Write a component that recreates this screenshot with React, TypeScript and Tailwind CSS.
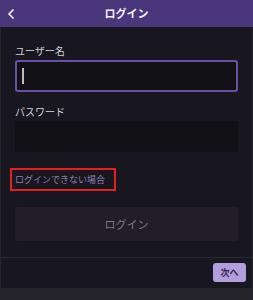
import { ChevronLeft } from 'lucide-react';

function Header() {
  return (
    <div className="relative flex h-[27px] items-center justify-center bg-[#4a367b]">
      <ChevronLeft
        className="absolute top-[6px] left-[3px] h-[16px] w-[16px] text-white"
        strokeWidth={2.5}
      />
      <span className="text-[11px] leading-none font-bold text-[#f1eef8]">ログイン</span>
    </div>
  );
}

function Field({ label, active }: { label: string; active?: boolean }) {
  return (
    <div className="flex flex-col gap-[3px]">
      <span className="text-[10px] leading-[13px] text-[#d6d4dc]">{label}</span>
      <div
        className={
          active
            ? 'flex h-[32px] items-center rounded-[3px] border-2 border-[#6a4fa6] bg-[#111014] pl-[5px]'
            : 'h-[31px] rounded-[2px] bg-[#111014]'
        }
      >
        {active && <span className="h-[16px] w-[2px] bg-[#bcb6c8]" />}
      </div>
    </div>
  );
}

export default function App() {
  return (
    <div
      className="flex h-[300px] w-[253px] flex-col bg-[#18161f]"
      style={{ fontFamily: '"Noto Sans CJK JP", "Noto Sans", sans-serif' }}
    >
      <Header />
      <div className="flex flex-1 flex-col border-x border-[#272430]">
        <div className="flex flex-col px-[14px] pt-[17px]">
          <Field label="ユーザー名" active />
          <div className="mt-[13px]">
            <Field label="パスワード" />
          </div>
          <div className="mt-[16px] -ml-[5px] flex h-[23px] w-[106px] items-center border-2 border-[#e3201f] pl-[3px]">
            <span className="text-[9px] leading-none whitespace-nowrap text-[#8e81b8]">
              ログインできない場合
            </span>
          </div>
          <div className="mt-[16px] flex h-[34px] items-center justify-center rounded-[2px] bg-[#211d2b]">
            <span className="text-[11px] text-[#7c7a84]">ログイン</span>
          </div>
        </div>
        <div className="mt-[16px] flex h-[31px] items-start justify-end border-t border-[#2b2836] pt-[5px] pr-[6px]">
          <div className="flex h-[19px] w-[33px] items-center justify-center rounded-[3px] bg-[#b39ddc]">
            <span className="text-[9px] leading-none font-bold text-[#2e2645]">次へ</span>
          </div>
        </div>
        <div className="flex-1 bg-[#25242a]" />
      </div>
    </div>
  );
}
